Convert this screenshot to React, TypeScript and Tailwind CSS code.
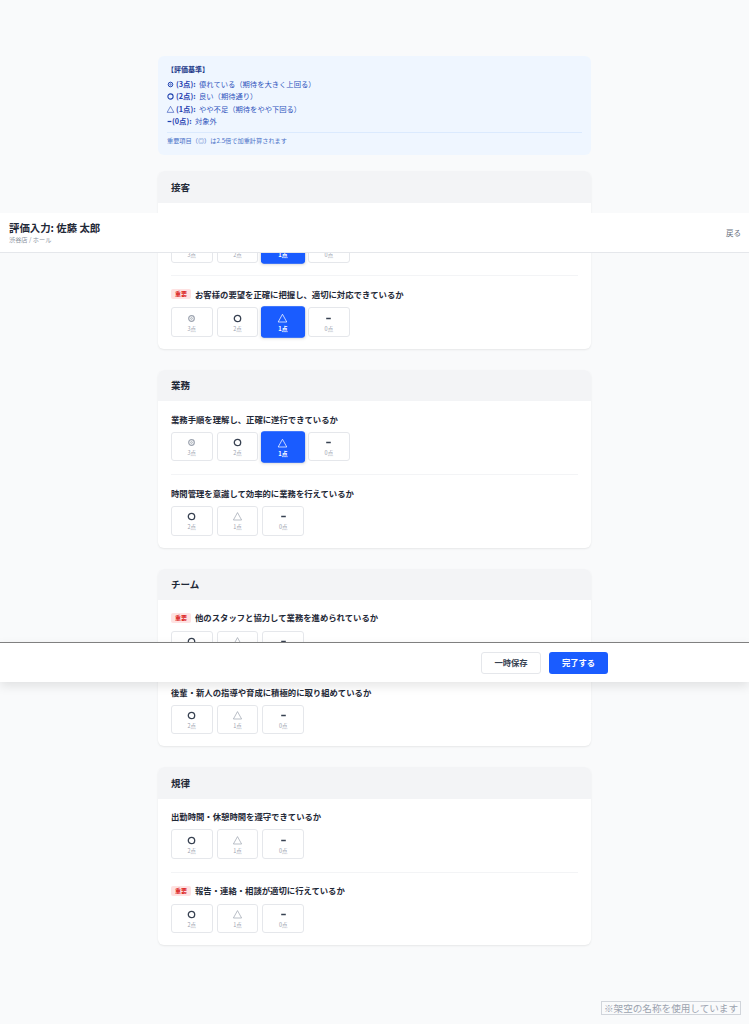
const font = { fontFamily: '"Noto Sans CJK JP", "Noto Sans", sans-serif' };

type Question = {
  text: string;
  important?: boolean;
  options: number[];
  selected?: number;
};

type Category = { title: string; questions: Question[] };

const categories: Category[] = [
  {
    title: "接客",
    questions: [
      { text: "笑顔で明るくお客様に接しているか", options: [3, 2, 1, 0], selected: 1 },
      { text: "お客様の要望を正確に把握し、適切に対応できているか", important: true, options: [3, 2, 1, 0], selected: 1 },
    ],
  },
  {
    title: "業務",
    questions: [
      { text: "業務手順を理解し、正確に遂行できているか", options: [3, 2, 1, 0], selected: 1 },
      { text: "時間管理を意識して効率的に業務を行えているか", options: [2, 1, 0] },
    ],
  },
  {
    title: "チーム",
    questions: [
      { text: "他のスタッフと協力して業務を進められているか", important: true, options: [2, 1, 0] },
      { text: "後輩・新人の指導や育成に積極的に取り組めているか", options: [2, 1, 0] },
    ],
  },
  {
    title: "規律",
    questions: [
      { text: "出勤時間・休憩時間を遵守できているか", options: [2, 1, 0] },
      { text: "報告・連絡・相談が適切に行えているか", important: true, options: [2, 1, 0] },
    ],
  },
];

function Mark({ score, className }: { score: number; className: string }) {
  const base = `shrink-0 fill-none stroke-current ${className}`;
  if (score === 3) {
    return (
      <svg viewBox="0 0 11 11" className={base}>
        <circle cx="5.5" cy="5.5" r="2.8" strokeWidth="1.2" />
        <circle cx="5.5" cy="5.5" r="0.9" strokeWidth="0.8" />
      </svg>
    );
  }
  if (score === 2) {
    return (
      <svg viewBox="0 0 11 11" className={base}>
        <circle cx="5.5" cy="5.5" r="3.2" strokeWidth="1.3" />
      </svg>
    );
  }
  if (score === 1) {
    return (
      <svg viewBox="0 0 11 11" className={base}>
        <path d="M5.5 1.6 9.6 9H1.4Z" strokeWidth="0.7" />
      </svg>
    );
  }
  return (
    <svg viewBox="0 0 11 11" className={base}>
      <path d="M3.2 5.5h4.6" strokeWidth="1.5" />
    </svg>
  );
}

function ScoreButton({ score, selected, four }: { score: number; selected: boolean; four: boolean }) {
  // 3択の行だけ△が薄い
  let markColor = "text-[#374151]";
  if (score === 3) markColor = "text-[#9ca3af]";
  if (score === 1 && !four) markColor = "text-[#9ca3af]";
  if (selected) markColor = "text-white";

  return (
    <button
      className={
        selected
          ? "flex h-[29.7px] w-[41.7px] scale-105 flex-col items-center rounded-[3px] border border-[#1a5cff] bg-[#1a5cff] pt-[4.5px] shadow-sm"
          : "flex h-[29.7px] w-[41.7px] flex-col items-center rounded-[3px] border border-[#e5e7eb] bg-white pt-[4.5px]"
      }
    >
      <Mark score={score} className={`h-[11px] w-[11px] ${markColor}`} />
      <span
        className={
          selected
            ? "mt-[2px] text-[5.5px] leading-[7px] font-bold text-white"
            : "mt-[2px] text-[5.5px] leading-[7px] text-[#9ca3af]"
        }
      >
        {score}点
      </span>
    </button>
  );
}

function QuestionRow({ q, first }: { q: Question; first: boolean }) {
  return (
    <div className={first ? "" : "mt-[12.5px] border-t border-[#f3f4f6] pt-[11px]"}>
      <div className="flex h-[14px] items-center gap-[4px]">
        {q.important && (
          <span className="rounded-[2px] bg-[#fee2e2] px-[4px] text-[6px] leading-[10px] font-bold text-[#dc2626]">
            重要
          </span>
        )}
        <span className="text-[8.35px] font-bold text-[#1f2937]">{q.text}</span>
      </div>
      <div className="mt-[6px] flex gap-[4px]">
        {q.options.map((o) => (
          <ScoreButton key={o} score={o} selected={q.selected === o} four={q.options.length === 4} />
        ))}
      </div>
    </div>
  );
}

function CategoryCard({ category }: { category: Category }) {
  return (
    <section className="mt-[21px] h-[177.8px] overflow-hidden rounded-[6px] bg-white shadow-[0_1px_2px_rgba(0,0,0,0.08)]">
      <h2 className="flex h-[31.5px] items-center bg-[#f3f4f6] px-[13px] text-[9.5px] font-bold text-[#1f2937]">
        {category.title}
      </h2>
      <div className="px-[13px] pt-[10.5px]">
        {category.questions.map((q, i) => (
          <QuestionRow key={q.text} q={q} first={i === 0} />
        ))}
      </div>
    </section>
  );
}

function Legend({ score, label, text }: { score: number; label: string; text: string }) {
  return (
    <div className="flex h-[12.5px] items-center text-[7.3px]">
      <div className={score === 0 ? "-ml-[2px] w-[7px]" : "-ml-[1px] w-[10px]"}>
        <Mark score={score} className="h-[9px] w-[9px] text-[#1e40af]" />
      </div>
      <span className="font-bold text-[#1e40af]">({label}):</span>
      <span className="ml-[3.5px] text-[#2f55bd]">{text}</span>
    </div>
  );
}

export default function App() {
  return (
    <div className="relative h-[1024px] overflow-hidden bg-[#f9fafb]" style={font}>
      <main className="mx-auto w-[433px] pt-[56px]">
        <div className="h-[99px] rounded-[6px] bg-[#eff6ff] px-[9px] pt-[7px]">
          <div className="h-[13px] text-[7px] leading-[13px] font-bold text-[#1e3a8a]">【評価基準】</div>
          <div className="mt-[2px]">
            <Legend score={3} label="3点" text="優れている（期待を大きく上回る）" />
            <Legend score={2} label="2点" text="良い（期待通り）" />
            <Legend score={1} label="1点" text="やや不足（期待をやや下回る）" />
            <Legend score={0} label="0点" text="対象外" />
          </div>
          <div className="mt-[4px] border-t border-[#dbeafe] pt-[1px] text-[6.2px] leading-[13px] text-[#4a72c8]">
            重要項目（◎）は2.5倍で加重計算されます
          </div>
        </div>
        <div className="mt-[-5px]">
          {categories.map((c) => (
            <CategoryCard key={c.title} category={c} />
          ))}
        </div>
      </main>

      <header className="absolute top-[213px] right-0 left-0 flex h-[40px] items-center justify-between border-b border-[#e5e7eb] bg-white pr-[8px] pl-[9px]">
        <div>
          <h1 className="text-[10.4px] leading-[14px] font-bold text-[#1f2937]">評価入力: 佐藤 太郎</h1>
          <p className="text-[6.2px] leading-[10px] text-[#8b93a1]">渋谷店 / ホール</p>
        </div>
        <span className="text-[7.5px] text-[#6b7280]">戻る</span>
      </header>

      <footer className="absolute top-[642px] right-0 left-0 flex h-[40px] items-center justify-end gap-[8px] border-t border-[#808080] bg-white pr-[141px] shadow-[0_4px_10px_rgba(0,0,0,0.1)]">
        <button className="h-[22px] w-[60px] rounded-[3px] border border-[#e5e7eb] bg-white text-[8.3px] font-bold text-[#374151]">
          一時保存
        </button>
        <button className="h-[22px] w-[59px] rounded-[3px] bg-[#1a5cff] text-[8.3px] font-bold text-white">
          完了する
        </button>
      </footer>

      <div className="absolute top-[1001px] right-[8px] flex h-[14px] w-[140px] items-center justify-center border border-[#d1d5db] bg-[#f9fafb] text-[9.6px] whitespace-nowrap text-[#9ca3af]">
        ※架空の名称を使用しています
      </div>
    </div>
  );
}
